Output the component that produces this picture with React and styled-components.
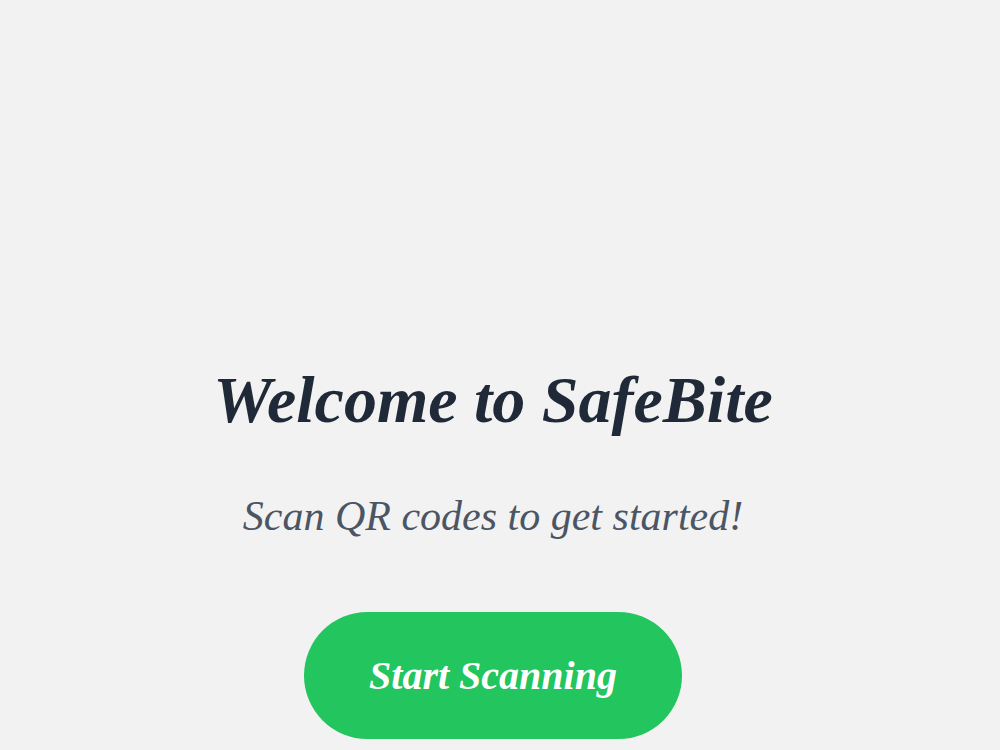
import React from "react";
import styled, { createGlobalStyle } from "styled-components";

const GlobalStyle = createGlobalStyle`
  * { box-sizing: border-box; }
  body {
    margin: 0;
    background: #f2f2f2;
    font-family: "Liberation Serif", serif;
    font-style: italic;
  }
`;

const Screen = styled.main`
  display: flex;
  flex-direction: column;
  align-items: center;
  min-height: 100vh;
  padding: 360px 16px 11px 2px;
  text-align: center;
`;

const Title = styled.h1`
  margin: 0;
  font-size: 66px;
  line-height: 80px;
  font-weight: 700;
  color: #1f2937;
`;

const Subtitle = styled.p`
  margin: 52px 0 0;
  font-size: 42px;
  line-height: 48px;
  color: #4b5563;
`;

const ScanButton = styled.button`
  min-width: 378px;
  margin-top: 72px;
  padding: 40px 48px;
  border: 0;
  border-radius: 64px;
  background: #22c55e;
  color: #ffffff;
  font: inherit;
  font-size: 40px;
  line-height: 47px;
  font-weight: 700;
  cursor: pointer;
`;

export default function App() {
  return (
    <>
      <GlobalStyle />
      <Screen>
        <Title>Welcome to SafeBite</Title>
        <Subtitle>Scan QR codes to get started!</Subtitle>
        <ScanButton type="button">Start Scanning</ScanButton>
      </Screen>
    </>
  );
}
